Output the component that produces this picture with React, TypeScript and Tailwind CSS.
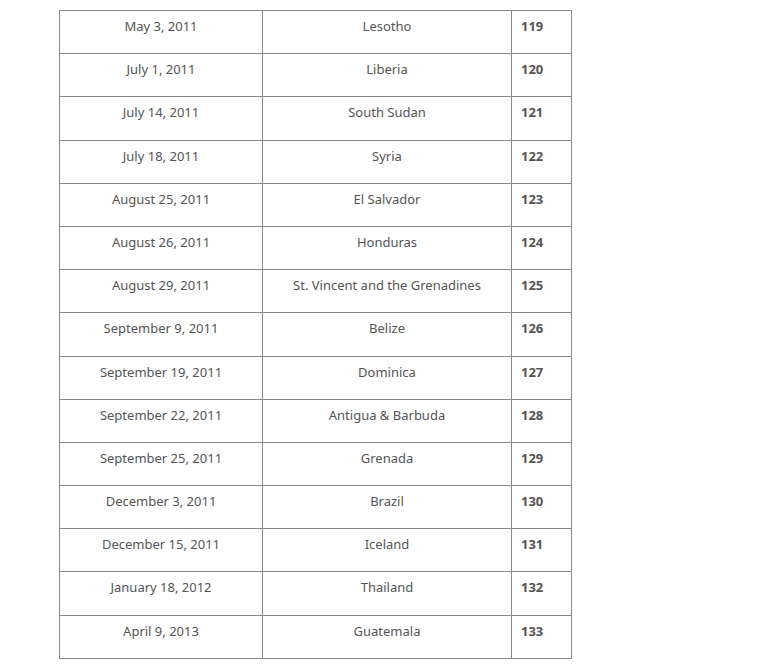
const rows: [string, string, string][] = [
  ['May 3, 2011', 'Lesotho', '119'],
  ['July 1, 2011', 'Liberia', '120'],
  ['July 14, 2011', 'South Sudan', '121'],
  ['July 18, 2011', 'Syria', '122'],
  ['August 25, 2011', 'El Salvador', '123'],
  ['August 26, 2011', 'Honduras', '124'],
  ['August 29, 2011', 'St. Vincent and the Grenadines', '125'],
  ['September 9, 2011', 'Belize', '126'],
  ['September 19, 2011', 'Dominica', '127'],
  ['September 22, 2011', 'Antigua & Barbuda', '128'],
  ['September 25, 2011', 'Grenada', '129'],
  ['December 3, 2011', 'Brazil', '130'],
  ['December 15, 2011', 'Iceland', '131'],
  ['January 18, 2012', 'Thailand', '132'],
  ['April 9, 2013', 'Guatemala', '133'],
];

export default function App() {
  return (
    <div className="w-[761px] h-[668px] bg-white pt-[10px] pl-[59px] overflow-hidden">
      <table className="border-collapse w-[513px] text-[13px] text-[#555] [font-family:'Noto_Sans',sans-serif]">
        <tbody>
          {rows.map(([date, country, num]) => (
            <tr key={num} className="h-[43.2px]">
              <td className="w-[203px] border border-[#888] align-top text-center pt-[5px] leading-[20px]">{date}</td>
              <td className="w-[249px] border border-[#888] align-top text-center pt-[5px] leading-[20px]">{country}</td>
              <td className="border border-[#888] align-top text-left pl-[9px] pt-[5px] leading-[20px] font-bold">{num}</td>
            </tr>
          ))}
        </tbody>
      </table>
    </div>
  );
}
